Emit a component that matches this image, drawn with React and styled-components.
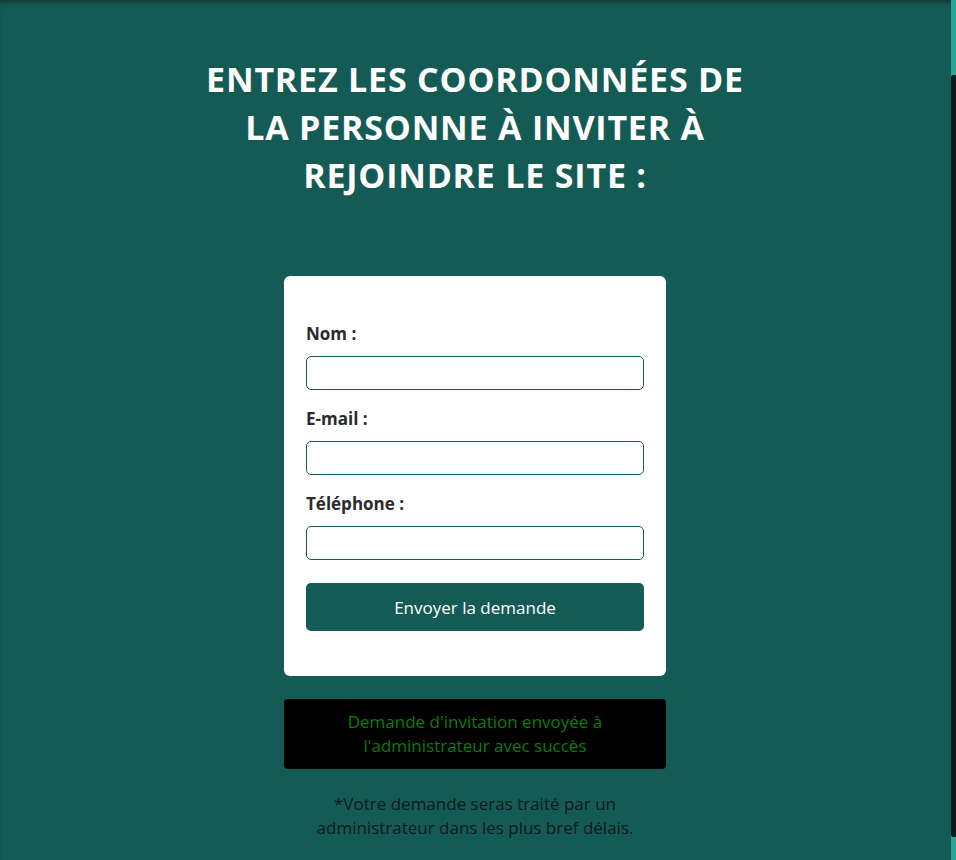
import React from "react";
import styled, { createGlobalStyle } from "styled-components";

const GlobalStyle = createGlobalStyle`
	html, body {
		margin: 0;
		padding: 0;
		background-color: #155b55;
		font-family: "Open Sans", "Noto Sans", sans-serif;
		overflow: hidden;
	}
	* {
		box-sizing: border-box;
	}
`

const Page = styled.div`
	min-height: 860px;
	padding-right: 6px;
	display: flex;
	flex-direction: column;
	align-items: center;
	box-shadow: inset 0 6px 6px -4px rgba(0, 0, 0, 0.45);
`

const Title = styled.h1`
	margin: 55px 0 77px;
	width: 560px;
	color: white;
	font-size: 34px;
	font-weight: 700;
	line-height: 48px;
	text-align: center;
	letter-spacing: 0.8px;
`

const Card = styled.form`
	width: 382px;
	background-color: white;
	border-radius: 6px;
	padding: 46px 22px 45px;
	display: flex;
	flex-direction: column;
`

const Label = styled.label`
	color: #2b2b2b;
	font-size: 17px;
	font-weight: 700;
	line-height: 24px;
	margin-bottom: 10px;
`

const Input = styled.input`
	height: 34px;
	border: 1px solid #155b55;
	border-radius: 5px;
	margin-bottom: 17px;
	outline: none;
	padding: 0 8px;
	font-size: 16px;
`

const SubmitButton = styled.button`
	margin-top: 6px;
	height: 48px;
	border: none;
	border-radius: 5px;
	background-color: #155b55;
	color: white;
	font-family: inherit;
	font-size: 17px;
`

const Alert = styled.div`
	margin-top: 23px;
	width: 382px;
	padding: 11px 50px;
	background-color: black;
	border-radius: 4px;
	color: #0a7d0a;
	font-size: 17px;
	line-height: 24px;
	text-align: center;
`

const Note = styled.p`
	margin: 23px 0 0;
	width: 340px;
	color: #0d1a1a;
	font-size: 17px;
	line-height: 24px;
	text-align: center;
`

const ScrollTrack = styled.div`
	position: fixed;
	top: 0;
	right: 0;
	width: 5px;
	height: 100vh;
	background-color: #2aa597;
	padding: 75px 0 23px;
	display: flex;
`

const ScrollThumb = styled.div`
	flex: 1;
	background-color: #0a1c1b;
	border-top-left-radius: 2px;
	border-bottom-left-radius: 2px;
`

const App = () => (
	<>
		<GlobalStyle />
		<Page>
			<Title>ENTREZ LES COORDONNÉES DE LA PERSONNE À INVITER À REJOINDRE LE SITE :</Title>
			<Card onSubmit={(e) => e.preventDefault()}>
				<Label htmlFor="nom">Nom :</Label>
				<Input id="nom" type="text" />
				<Label htmlFor="email">E-mail :</Label>
				<Input id="email" type="email" />
				<Label htmlFor="tel">Téléphone :</Label>
				<Input id="tel" type="tel" />
				<SubmitButton type="submit">Envoyer la demande</SubmitButton>
			</Card>
			<Alert>Demande d'invitation envoyée à l'administrateur avec succès</Alert>
			<Note>*Votre demande seras traité par un administrateur dans les plus bref délais.</Note>
		</Page>
		<ScrollTrack>
			<ScrollThumb />
		</ScrollTrack>
	</>
)

export default App;
